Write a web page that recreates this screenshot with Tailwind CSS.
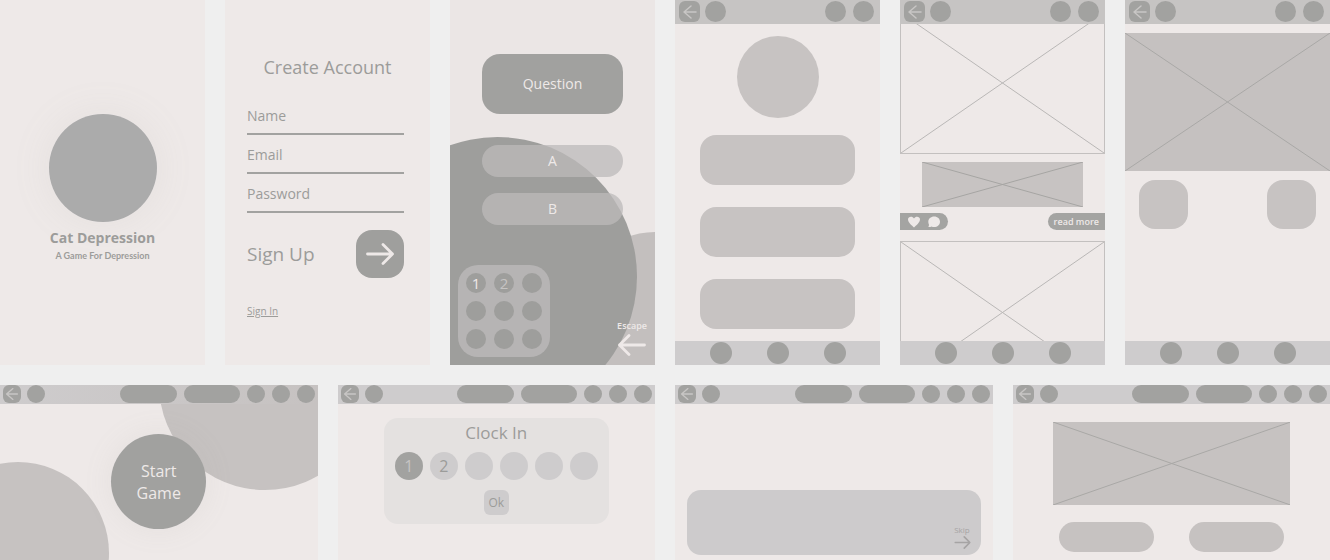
<!DOCTYPE html>
<html lang="en">
<head>
<meta charset="utf-8">
<meta name="viewport" content="width=device-width, initial-scale=1">
<title>Cat Depression wireframes</title>
<script src="https://cdn.jsdelivr.net/npm/@tailwindcss/browser@4"></script>
</head>
<body class="bg-[#efefef] font-['Open_Sans',sans-serif] font-medium text-[#9c9c9a]">
<svg class="hidden" aria-hidden="true">
  <symbol id="back" viewBox="0 0 20 20"><path d="M16 10H4M11 4L4 10L11 16" fill="none" stroke="currentColor" stroke-width="1.5" stroke-linecap="round" stroke-linejoin="round"/></symbol>
  <symbol id="next" viewBox="0 0 28 22"><path d="M1.500 11H26.500M17 1.500L26.500 11L17 20.500" fill="none" stroke="currentColor" stroke-width="2.8" stroke-linecap="round" stroke-linejoin="round"/></symbol>
  <symbol id="cross" viewBox="0 0 100 100" preserveAspectRatio="none"><path d="M0 0L100 100M100 0L0 100" fill="none" stroke="currentColor" stroke-width="1" vector-effect="non-scaling-stroke"/></symbol>
</svg>
<main class="flex min-h-screen flex-col gap-5 overflow-hidden">
  <div class="grid grid-cols-6 gap-5">

    <!-- Splash -->
    <section class="flex h-[365px] flex-col items-center bg-[#eee9e8] pt-[114px]">
      <div class="size-[108px] rounded-full bg-[#ababab] shadow-[0_0_40px_rgba(160,160,150,0.1)]"></div>
      <h1 class="mt-1.5 text-sm leading-5 font-bold">Cat Depression</h1>
      <p class="font-[Lato,sans-serif] text-[9px] leading-4 font-bold">A Game For Depression</p>
    </section>

    <!-- Create account -->
    <section class="h-[365px] bg-[#eee9e8] px-[22px] pt-[52px]">
      <h2 class="text-center text-lg leading-[30px] whitespace-nowrap">Create Account</h2>
      <form class="mt-[14px] mr-1">
        <div class="flex h-[39px] items-center border-b-2 border-[#a2a2a0] pt-0.5"><label for="name" class="text-sm">Name</label><input id="name" class="min-w-0 flex-1 outline-none"></div>
        <div class="flex h-[39px] items-center border-b-2 border-[#a2a2a0] pt-0.5"><label for="email" class="text-sm">Email</label><input id="email" type="email" class="min-w-0 flex-1 outline-none"></div>
        <div class="flex h-[39px] items-center border-b-2 border-[#a2a2a0] pt-0.5"><label for="password" class="text-sm">Password</label><input id="password" type="password" class="min-w-0 flex-1 outline-none"></div>
        <div class="mt-[17px] flex items-center justify-between">
          <label for="go" class="text-[19px]">Sign Up</label>
          <button id="go" type="button" class="flex size-12 items-center justify-center rounded-2xl bg-[#9f9f9d] text-[#eee9e8]"><svg class="h-[22px] w-7"><use href="#next"/></svg></button>
        </div>
      </form>
      <a href="#" class="mt-[25px] block w-fit text-[10px] leading-4 underline">Sign In</a>
    </section>

    <!-- Question -->
    <section class="relative isolate flex h-[365px] flex-col overflow-hidden bg-[#ebe6e5] px-2 pt-[54px] pb-2 text-[#eee9e8]">
      <div class="absolute top-[232px] left-[125px] -z-10 size-40 rounded-full bg-[#c3bfbe]"></div>
      <div class="absolute top-[137px] -left-[92px] -z-10 size-[279px] rounded-full bg-[#9e9e9c]"></div>
      <h2 class="mx-6 flex h-[60px] items-center justify-center rounded-[18px] bg-[#a1a19f] text-sm">Question</h2>
      <button class="mx-6 mt-[31px] h-8 rounded-2xl bg-[#bcb9b9]/75 text-sm">A</button>
      <button class="mx-6 mt-4 h-8 rounded-2xl bg-[#bcb9b9]/75 text-sm">B</button>
      <div class="mt-auto flex items-end justify-between">
        <div class="grid grid-cols-3 gap-2 rounded-[20px] bg-[#b6b4b4] p-2 text-[15px] leading-5">
          <button class="size-5 rounded-full bg-[#9e9e9c]">1</button>
          <button class="size-5 rounded-full bg-[#9e9e9c] text-[#c6c4c3]">2</button>
          <button aria-label="3" class="size-5 rounded-full bg-[#9e9e9c]"></button>
          <button aria-label="4" class="size-5 rounded-full bg-[#9e9e9c]"></button>
          <button aria-label="5" class="size-5 rounded-full bg-[#9e9e9c]"></button>
          <button aria-label="6" class="size-5 rounded-full bg-[#9e9e9c]"></button>
          <button aria-label="7" class="size-5 rounded-full bg-[#9e9e9c]"></button>
          <button aria-label="8" class="size-5 rounded-full bg-[#9e9e9c]"></button>
          <button aria-label="9" class="size-5 rounded-full bg-[#9e9e9c]"></button>
        </div>
        <button class="flex flex-col items-center pb-px text-[9px] leading-4 font-semibold">Escape<svg class="h-[22px] w-7 rotate-180"><use href="#next"/></svg></button>
      </div>
    </section>

    <!-- Profile -->
    <section class="flex h-[365px] flex-col bg-[#eee9e8]">
      <header class="flex h-6 items-start bg-[#c6c4c3] pt-px pr-1.5 pl-1">
        <button aria-label="Back" class="flex size-[21px] items-center justify-center rounded-md bg-[#a2a2a0] text-[#c8c6c5]"><svg class="size-5"><use href="#back"/></svg></button>
        <button aria-label="Home" class="ml-[5px] size-[21px] rounded-full bg-[#a2a2a0]"></button>
        <button aria-label="Search" class="ml-auto size-[21px] rounded-full bg-[#a2a2a0]"></button>
        <button aria-label="Menu" class="ml-[7px] size-[21px] rounded-full bg-[#a2a2a0]"></button>
      </header>
      <div class="flex flex-1 flex-col px-[25px] pt-3">
        <div class="size-[82px] self-center rounded-full bg-[#c7c3c2]"></div>
        <div class="mt-[17px] flex flex-col gap-[22px]">
          <div class="h-[50px] rounded-2xl bg-[#c7c3c2]"></div>
          <div class="h-[50px] rounded-2xl bg-[#c7c3c2]"></div>
          <div class="h-[50px] rounded-2xl bg-[#c7c3c2]"></div>
        </div>
      </div>
      <nav class="flex h-6 items-center justify-center gap-[35px] bg-[#cecccd]">
        <button aria-label="Tab 1" class="size-[22px] rounded-full bg-[#a2a2a0]"></button>
        <button aria-label="Tab 2" class="size-[22px] rounded-full bg-[#a2a2a0]"></button>
        <button aria-label="Tab 3" class="size-[22px] rounded-full bg-[#a2a2a0]"></button>
      </nav>
    </section>

    <!-- Feed -->
    <section class="flex h-[365px] flex-col bg-[#eee9e8]">
      <header class="z-10 flex h-6 shrink-0 items-start bg-[#c6c4c3] pt-px pr-1.5 pl-1">
        <button aria-label="Back" class="flex size-[21px] items-center justify-center rounded-md bg-[#a2a2a0] text-[#c8c6c5]"><svg class="size-5"><use href="#back"/></svg></button>
        <button aria-label="Home" class="ml-[5px] size-[21px] rounded-full bg-[#a2a2a0]"></button>
        <button aria-label="Search" class="ml-auto size-[21px] rounded-full bg-[#a2a2a0]"></button>
        <button aria-label="Menu" class="ml-[7px] size-[21px] rounded-full bg-[#a2a2a0]"></button>
      </header>
      <div class="flex min-h-0 flex-1 flex-col overflow-hidden">
        <div class="-mt-3 h-[142px] shrink-0 border border-[#c3c0bf] text-[#b9b7b6]"><svg class="size-full"><use href="#cross"/></svg></div>
        <div class="mx-[22px] mt-2 h-[45px] shrink-0 bg-[#c7c3c2] text-[#a6a5a3]"><svg class="size-full"><use href="#cross"/></svg></div>
        <div class="mt-1.5 flex h-[17px] shrink-0 justify-between text-[#eee9e8]">
          <div class="flex items-center gap-2 rounded-r-full bg-[#a4a4a2] px-2">
            <button aria-label="Like"><svg class="h-3 w-3" viewBox="0 0 12 12"><path d="M6 11.500C4 9.500 0 6.500 0 3.500C0 .3 4.400-.2 6 2.400C7.600-.2 12 .3 12 3.500C12 6.500 8 9.500 6 11.500Z" fill="currentColor"/></svg></button>
            <button aria-label="Comment"><svg class="h-3 w-3" viewBox="0 0 12 12"><path d="M6.200 .5C9.600 .5 12 2.800 12 5.700C12 8.800 9.500 11 6.200 11C5.200 11 4.300 10.800 3.500 10.400C2.600 11 1.500 11.200 .3 11C.9 10.100 1.100 9.300 .9 8.300C.5 7.500 .3 6.700 .3 5.700C.3 2.800 2.800 .5 6.200 .5Z" fill="currentColor"/></svg></button>
          </div>
          <button class="rounded-l-full bg-[#a4a4a2] px-1.5 text-[9px] leading-4 font-semibold">read more</button>
        </div>
        <div class="mt-[11px] h-[143px] shrink-0 border border-[#c3c0bf] text-[#b9b7b6]"><svg class="size-full"><use href="#cross"/></svg></div>
      </div>
      <nav class="flex h-6 shrink-0 items-center justify-center gap-[35px] bg-[#cecccd]">
        <button aria-label="Tab 1" class="size-[22px] rounded-full bg-[#a2a2a0]"></button>
        <button aria-label="Tab 2" class="size-[22px] rounded-full bg-[#a2a2a0]"></button>
        <button aria-label="Tab 3" class="size-[22px] rounded-full bg-[#a2a2a0]"></button>
      </nav>
    </section>

    <!-- Article -->
    <section class="flex h-[365px] flex-col bg-[#eee9e8]">
      <header class="flex h-6 items-start bg-[#c6c4c3] pt-px pr-1.5 pl-1">
        <button aria-label="Back" class="flex size-[21px] items-center justify-center rounded-md bg-[#a2a2a0] text-[#c8c6c5]"><svg class="size-5"><use href="#back"/></svg></button>
        <button aria-label="Home" class="ml-[5px] size-[21px] rounded-full bg-[#a2a2a0]"></button>
        <button aria-label="Search" class="ml-auto size-[21px] rounded-full bg-[#a2a2a0]"></button>
        <button aria-label="Menu" class="ml-[7px] size-[21px] rounded-full bg-[#a2a2a0]"></button>
      </header>
      <div class="flex-1 pt-[9px]">
        <div class="h-[138px] bg-[#c5c1c0] text-[#a9a8a6]"><svg class="size-full"><use href="#cross"/></svg></div>
        <div class="mt-[9px] flex justify-between px-[14px]">
          <div class="size-[49px] rounded-2xl bg-[#c7c3c2]"></div>
          <div class="size-[49px] rounded-2xl bg-[#c7c3c2]"></div>
        </div>
      </div>
      <nav class="flex h-6 items-center justify-center gap-[35px] bg-[#cecccd]">
        <button aria-label="Tab 1" class="size-[22px] rounded-full bg-[#a2a2a0]"></button>
        <button aria-label="Tab 2" class="size-[22px] rounded-full bg-[#a2a2a0]"></button>
        <button aria-label="Tab 3" class="size-[22px] rounded-full bg-[#a2a2a0]"></button>
      </nav>
    </section>
  </div>

  <div class="grid flex-1 grid-cols-4 gap-5">

    <!-- Start game -->
    <section class="relative isolate flex flex-col overflow-hidden bg-[#eee9e8]">
      <div class="absolute -top-[107px] left-[159px] -z-10 size-[212px] rounded-full bg-[#c6c2c1]"></div>
      <div class="absolute top-[77px] -left-[73px] -z-10 size-[182px] rounded-full bg-[#c6c2c1]"></div>
      <header class="flex h-[19px] items-start bg-linear-to-r from-[#cecccd] to-[#c6c2c1] pr-[3px] pl-[3px]">
        <button aria-label="Back" class="flex size-[18px] items-center justify-center rounded-md bg-[#a2a2a0] text-[#c8c6c5]"><svg class="size-[18px]"><use href="#back"/></svg></button>
        <button aria-label="Home" class="ml-1.5 size-[18px] rounded-full bg-[#a2a2a0]"></button>
        <div class="ml-auto flex gap-[7px]">
          <button aria-label="Coins" class="h-[18px] w-[57px] rounded-full bg-[#a2a2a0]"></button>
          <button aria-label="Gems" class="h-[18px] w-14 rounded-full bg-[#a2a2a0]"></button>
          <button aria-label="Mail" class="size-[18px] rounded-full bg-[#a2a2a0]"></button>
          <button aria-label="Search" class="size-[18px] rounded-full bg-[#a2a2a0]"></button>
          <button aria-label="Menu" class="size-[18px] rounded-full bg-[#a2a2a0]"></button>
        </div>
      </header>
      <button class="mt-[30px] size-[95px] self-center rounded-full bg-[#a1a19f] text-base leading-[22px] text-[#eee9e8] shadow-[0_0_30px_rgba(160,160,150,0.1)]">Start<br>Game</button>
    </section>

    <!-- Clock in -->
    <section class="flex flex-col overflow-hidden bg-[#eee9e8]">
      <header class="flex h-[19px] items-start bg-[#cecccd] pr-[3px] pl-[3px]">
        <button aria-label="Back" class="flex size-[18px] items-center justify-center rounded-md bg-[#a2a2a0] text-[#c8c6c5]"><svg class="size-[18px]"><use href="#back"/></svg></button>
        <button aria-label="Home" class="ml-1.5 size-[18px] rounded-full bg-[#a2a2a0]"></button>
        <div class="ml-auto flex gap-[7px]">
          <button aria-label="Coins" class="h-[18px] w-[57px] rounded-full bg-[#a2a2a0]"></button>
          <button aria-label="Gems" class="h-[18px] w-14 rounded-full bg-[#a2a2a0]"></button>
          <button aria-label="Mail" class="size-[18px] rounded-full bg-[#a2a2a0]"></button>
          <button aria-label="Search" class="size-[18px] rounded-full bg-[#a2a2a0]"></button>
          <button aria-label="Menu" class="size-[18px] rounded-full bg-[#a2a2a0]"></button>
        </div>
      </header>
      <div class="mx-[46px] mt-[14px] flex h-[106px] flex-col items-center rounded-[14px] bg-[#e4e1e0] pt-[3px]">
        <h2 class="text-[17px] leading-6">Clock In</h2>
        <div class="mt-[7px] flex gap-[7px] text-base">
          <button class="size-7 rounded-full bg-[#a2a2a0] text-[#c6c4c3]">1</button>
          <button class="size-7 rounded-full bg-[#cecccd]">2</button>
          <button aria-label="Day 3" class="size-7 rounded-full bg-[#cecccd]"></button>
          <button aria-label="Day 4" class="size-7 rounded-full bg-[#cecccd]"></button>
          <button aria-label="Day 5" class="size-7 rounded-full bg-[#cecccd]"></button>
          <button aria-label="Day 6" class="size-7 rounded-full bg-[#cecccd]"></button>
        </div>
        <button class="mt-2.5 size-[25px] rounded-md bg-[#cecccd] text-xs">Ok</button>
      </div>
    </section>

    <!-- Dialogue -->
    <section class="flex flex-col overflow-hidden bg-[#eee9e8]">
      <header class="flex h-[19px] items-start bg-[#cecccd] pr-[3px] pl-[3px]">
        <button aria-label="Back" class="flex size-[18px] items-center justify-center rounded-md bg-[#a2a2a0] text-[#c8c6c5]"><svg class="size-[18px]"><use href="#back"/></svg></button>
        <button aria-label="Home" class="ml-1.5 size-[18px] rounded-full bg-[#a2a2a0]"></button>
        <div class="ml-auto flex gap-[7px]">
          <button aria-label="Coins" class="h-[18px] w-[57px] rounded-full bg-[#a2a2a0]"></button>
          <button aria-label="Gems" class="h-[18px] w-14 rounded-full bg-[#a2a2a0]"></button>
          <button aria-label="Mail" class="size-[18px] rounded-full bg-[#a2a2a0]"></button>
          <button aria-label="Search" class="size-[18px] rounded-full bg-[#a2a2a0]"></button>
          <button aria-label="Menu" class="size-[18px] rounded-full bg-[#a2a2a0]"></button>
        </div>
      </header>
      <div class="mx-3 mt-[86px] flex h-[65px] items-end justify-end rounded-[14px] bg-[#cdcbcc] pr-2.5 pb-1.5">
        <button class="flex flex-col items-center text-[8px] leading-3 text-[#a6a4a4]">Skip<svg class="h-[13px] w-[17px]" viewBox="0 0 28 22"><use href="#next"/></svg></button>
      </div>
    </section>

    <!-- Gallery -->
    <section class="flex flex-col overflow-hidden bg-[#eee9e8]">
      <header class="flex h-[19px] items-start bg-[#cecccd] pr-[3px] pl-[3px]">
        <button aria-label="Back" class="flex size-[18px] items-center justify-center rounded-md bg-[#a2a2a0] text-[#c8c6c5]"><svg class="size-[18px]"><use href="#back"/></svg></button>
        <button aria-label="Home" class="ml-1.5 size-[18px] rounded-full bg-[#a2a2a0]"></button>
        <div class="ml-auto flex gap-[7px]">
          <button aria-label="Coins" class="h-[18px] w-[57px] rounded-full bg-[#a2a2a0]"></button>
          <button aria-label="Gems" class="h-[18px] w-14 rounded-full bg-[#a2a2a0]"></button>
          <button aria-label="Mail" class="size-[18px] rounded-full bg-[#a2a2a0]"></button>
          <button aria-label="Search" class="size-[18px] rounded-full bg-[#a2a2a0]"></button>
          <button aria-label="Menu" class="size-[18px] rounded-full bg-[#a2a2a0]"></button>
        </div>
      </header>
      <div class="mx-10 mt-[18px] h-[83px] bg-[#c6c2c1] text-[#a9a8a6]"><svg class="size-full"><use href="#cross"/></svg></div>
      <div class="mx-[46px] mt-[17px] flex justify-between">
        <div class="h-[30px] w-[95px] rounded-full bg-[#c6c2c1]"></div>
        <div class="h-[30px] w-[95px] rounded-full bg-[#c6c2c1]"></div>
      </div>
    </section>
  </div>
</main>
</body>
</html>
